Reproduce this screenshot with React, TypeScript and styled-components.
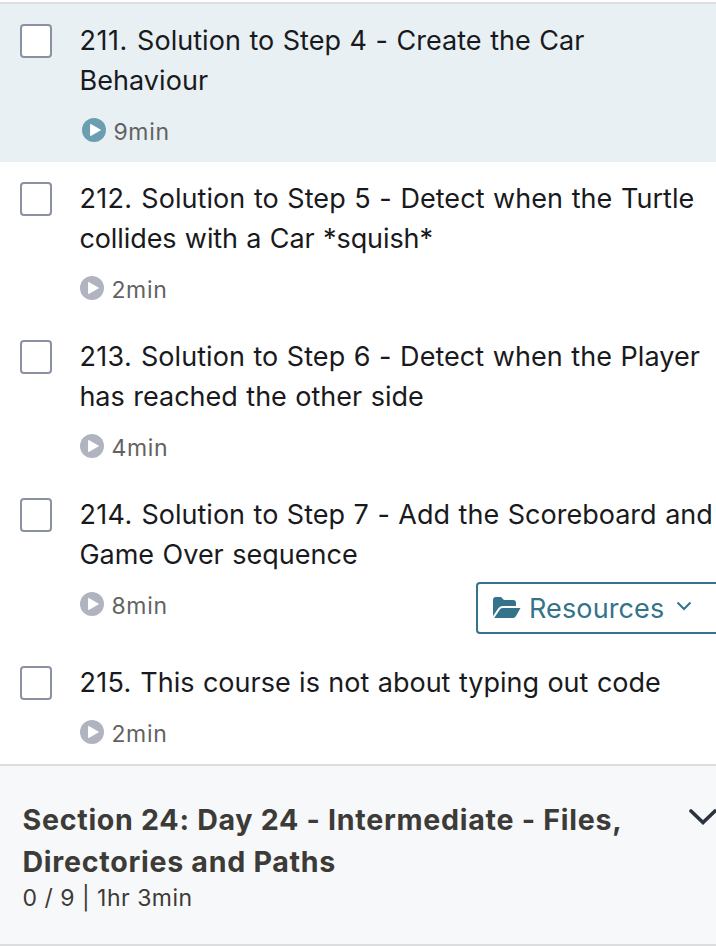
import React from 'react';
import styled, { createGlobalStyle } from 'styled-components';

const Global = createGlobalStyle`
  *{box-sizing:border-box}
  html,body{margin:0;background:#fff;overflow:hidden}
  body{font-family:Inter,sans-serif;color:#1c1d1f;}
`;
const Page = styled.main`
  width:716px;height:946px;overflow:hidden;display:flex;flex-direction:column;
  padding-top:2px;
`;
const Lecture = styled.article<{ $active?: boolean; $height: number }>`
  display:flex;flex:none;height:${p => p.$height}px;padding:17px 0 0 20px;gap:27.4px;white-space:nowrap;
  background:${p => p.$active ? '#e8f0f3' : '#fff'};
`;
const TopRule = styled.div`height:2px;flex:none;background:#dcdee1;`;
const Check = styled.span`flex:none;width:32px;height:34px;margin-top:3px;border:2px solid #8b91a2;border-radius:4px;background:#fff;`;
const Body = styled.div`flex:none;width:646.6px;`;
const Title = styled.div`font-size:27px;line-height:40px;word-spacing:.9px;color:#191a20;`;
const Line = styled.div<{ $spacing: number }>`letter-spacing:${p => p.$spacing}px;`;
const Ordinal = styled.span<{ $spacing: number }>`letter-spacing:${p => p.$spacing}px;`;
const Meta = styled.div<{ $active?: boolean }>`
  display:flex;align-items:center;gap:7.4px;height:28px;margin-top:17px;padding-left:${p => p.$active ? 2.6 : .6}px;
  font-size:23px;letter-spacing:.7px;color:#626262;
`;
const PlayIcon = styled.svg`flex:none;width:24px;height:24px;margin-top:-4px;`;
const Resources = styled.button`
  display:flex;align-items:center;flex:none;width:250px;height:52px;margin:4px 0 0 auto;padding:0 0 0 15px;
  border:2px solid #347389;border-radius:4px;background:#fff;color:#347389;font:27px Inter,sans-serif;letter-spacing:.12px;
`;
const FolderIcon = styled.svg`flex:none;width:28px;height:22px;margin-right:8px;`;
const SmallChevron = styled.svg`flex:none;width:16px;height:10px;margin:-5px 0 0 12px;`;
const Section = styled.section`
  display:flex;justify-content:space-between;height:182px;flex:none;padding:33px 0 0 22.5px;
  background:#f7f8fa;border:solid #dcdddf;border-width:2px 0;color:#3c3b37;
`;
const Heading = styled.h2`margin:0;font-size:28.6px;line-height:42px;font-weight:700;letter-spacing:.71px;white-space:nowrap;`;
const Info = styled.div`font-size:23px;line-height:30px;letter-spacing:.5px;`;
const Chevron = styled.svg`flex:none;width:28px;height:18px;margin:9px -1px 0 0;`;

const Play = ({ color }: { color: string }) => (
  <PlayIcon viewBox="0 0 24 24">
    <circle cx="12" cy="12" r="12" fill={color}/>
    <path d="M8.6 6.4v11.2L18.4 12z" fill="#fff" stroke="#fff" strokeLinejoin="round"/>
  </PlayIcon>
);

type LectureData = {
  number: string; numberSpacing: number; lines: [string, number][];
  time: string; height: number; active?: boolean; resources?: boolean;
};
const lectures: LectureData[] = [
  { number: '211.', numberSpacing: .6, lines: [['Solution to Step 4 - Create the Car', .03], ['Behaviour', .08]], time: '9min', active: true, height: 158 },
  { number: '212.', numberSpacing: .35, lines: [['Solution to Step 5 - Detect when the Turtle', .062], ['collides with a Car *squish*', -.086]], time: '2min', height: 158 },
  { number: '213.', numberSpacing: .35, lines: [['Solution to Step 6 - Detect when the Player', .052], ['has reached the other side', 0]], time: '4min', height: 158 },
  { number: '214.', numberSpacing: .35, lines: [['Solution to Step 7 - Add the Scoreboard and', .015], ['Game Over sequence', 0]], time: '8min', resources: true, height: 168 },
  { number: '215.', numberSpacing: .3, lines: [['This course is not about typing out code', -.01]], time: '2min', height: 118 },
];

export default function App() {
  return <><Global/><Page><TopRule/>
    {lectures.map(l => <Lecture key={l.number} $active={l.active} $height={l.height}>
      <Check/>
      <Body>
        <Title>{l.lines.map(([text, spacing], i) => (
          <Line key={text} $spacing={spacing}>
            {i === 0 && <Ordinal $spacing={l.numberSpacing}>{l.number}{' '}</Ordinal>}{text}
          </Line>
        ))}</Title>
        <Meta $active={l.active}><Play color={l.active ? '#6a9eb0' : '#b0b4c1'}/><span>{l.time}</span>
          {l.resources && <Resources>
            <FolderIcon viewBox="0 0 28 22"><path d="M0 19V3Q0 0 3 0h5l3 3h9q3 0 3 3v3H10Q7 9 5.5 11z" fill="currentColor"/><path d="M1.5 20.5 7 12.3Q8 11 10 11h17.5L23 19q-1 2-3 2H2q-1 0-.5-.5z" fill="currentColor"/></FolderIcon>
            Resources
            <SmallChevron viewBox="0 0 16 10"><path d="m1.5 1.5 6.5 6.5 6.5-6.5" fill="none" stroke="currentColor" strokeWidth="2"/></SmallChevron>
          </Resources>}
        </Meta>
      </Body>
    </Lecture>)}
    <Section>
      <div><Heading>Section 24: Day 24 - Intermediate - Files,<br/>Directories and Paths</Heading><Info>0 / 9 | 1hr 3min</Info></div>
      <Chevron viewBox="0 0 28 18"><path d="m2 3 12 11.5L26 3" fill="none" stroke="#2b333f" strokeWidth="3.6" strokeLinecap="round"/></Chevron>
    </Section>
  </Page></>;
}
